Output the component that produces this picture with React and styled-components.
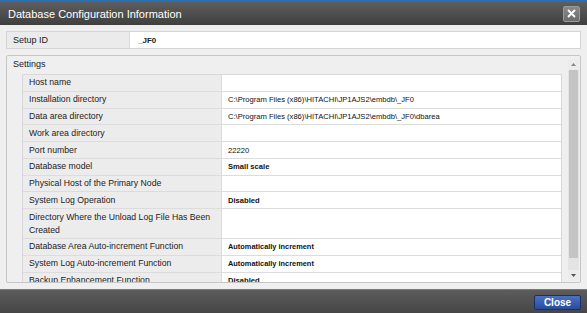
import React from "react";
import styled, { createGlobalStyle } from "styled-components";

const Global = createGlobalStyle`
  html, body { margin: 0; padding: 0; }
  body { font-family: "Liberation Sans", Arial, sans-serif; background: #efefef; }
`;

const Dialog = styled.div`
  width: 587px;
  height: 313px;
  display: flex;
  flex-direction: column;
  background: #efefef;
  overflow: hidden;
`;

const TitleBar = styled.div`
  height: 23px;
  border-top: 2px solid #2b6fb3;
  background: linear-gradient(#5e5e5e, #3f3f3f);
  display: flex;
  align-items: center;
  justify-content: space-between;
  padding: 0 7px 0 8px;
  box-sizing: content-box;
`;

const Title = styled.span`
  color: #ffffff;
  font-size: 11px;
`;

const XButton = styled.div`
  width: 15px;
  height: 14px;
  border: 1px solid #9a9a9a;
  border-radius: 2px;
  background: linear-gradient(#8a8a8a, #6c6c6c);
  display: flex;
  align-items: center;
  justify-content: center;
`;

const Body = styled.div`
  flex: 1;
  display: flex;
  flex-direction: column;
  gap: 6px;
  padding: 6px;
  min-height: 0;
`;

const SetupRow = styled.div`
  height: 16px;
  display: flex;
  border: 1px solid #d4d4d4;
  background: #ffffff;
  font-size: 9px;
  color: #222;
`;

const SetupLabel = styled.div`
  width: 116px;
  padding-left: 6px;
  background: #ebebeb;
  border-right: 1px solid #dadada;
  display: flex;
  align-items: center;
`;

const SetupValue = styled.div`
  padding-left: 8px;
  display: flex;
  align-items: center;
  font-weight: bold;
  font-size: 8px;
`;

const SettingsBox = styled.div`
  flex: 1;
  min-height: 0;
  display: flex;
  border: 1px solid #c6c6c6;
  border-radius: 2px;
  background: #efefef;
  padding: 0 1px 0 0;
`;

const ScrollContent = styled.div`
  flex: 1;
  overflow: hidden;
  padding: 1px 6px 0 6px;
`;

const Legend = styled.div`
  font-size: 9px;
  color: #222;
  height: 17px;
  line-height: 14px;
`;

const Table = styled.div`
  margin-left: 9px;
  border: 1px solid #d8d8d8;
  border-bottom: none;
  background: #ffffff;
`;

const Row = styled.div`
  display: grid;
  grid-template-columns: 199px 1fr;
  border-bottom: 1px solid #dcdcdc;
`;

const Label = styled.div`
  background: #ececec;
  border-right: 1px solid #dcdcdc;
  padding: 1.4px 6px;
  line-height: 13px;
  font-size: 8.7px;
  color: #222;
`;

const Value = styled.div`
  padding: 1.4px 6px;
  line-height: 13px;
  font-size: ${(p) => (p.$small ? "7.4px" : "7.6px")};
  font-weight: ${(p) => (p.$bold ? "bold" : "normal")};
  color: #111;
  white-space: nowrap;
  overflow: hidden;
`;

const Scrollbar = styled.div`
  width: 11px;
  display: flex;
  flex-direction: column;
  background: #e4e4e4;
  margin: 3px 0 1px 0;
`;

const Arrow = styled.div`
  height: 11px;
  display: flex;
  align-items: center;
  justify-content: center;
  background: #ececec;
`;

const Thumb = styled.div`
  flex: 1;
  margin: 0 1px ${(p) => p.$rest}px 1px;
  background: #c4c4c4;
`;

const Footer = styled.div`
  height: 23px;
  border-top: 1px solid #7a7a7a;
  background: linear-gradient(#5c5c5c, #464646);
  display: flex;
  align-items: center;
  justify-content: flex-end;
  padding-right: 6px;
`;

const CloseButton = styled.button`
  width: 47px;
  height: 15px;
  padding: 0;
  border: 1px solid #1a2f66;
  border-radius: 2px;
  background: linear-gradient(#4a72c4, #2a4c9c);
  color: #fff;
  font-family: "Liberation Sans", Arial, sans-serif;
  font-weight: bold;
  font-size: 10px;
  margin-top: 1px;
`;

const rows = [
  ["Host name", ""],
  ["Installation directory", "C:\\Program Files (x86)\\HITACHI\\JP1AJS2\\embdb\\_JF0"],
  ["Data area directory", "C:\\Program Files (x86)\\HITACHI\\JP1AJS2\\embdb\\_JF0\\dbarea"],
  ["Work area directory", ""],
  ["Port number", "22220"],
  ["Database model", "Small scale", true],
  ["Physical Host of the Primary Node", ""],
  ["System Log Operation", "Disabled", true],
  ["Directory Where the Unload Log File Has Been Created", ""],
  ["Database Area Auto-increment Function", "Automatically increment", true, true],
  ["System Log Auto-increment Function", "Automatically increment", true, true],
  ["Backup Enhancement Function", "Disabled", true],
];

export default function App() {
  return (
    <>
      <Global />
      <Dialog>
        <TitleBar>
          <Title>Database Configuration Information</Title>
          <XButton>
            <svg width="9" height="9" viewBox="0 0 9 9">
              <path d="M1 1 L8 8 M8 1 L1 8" stroke="#fff" strokeWidth="1.8" />
            </svg>
          </XButton>
        </TitleBar>
        <Body>
          <SetupRow>
            <SetupLabel>Setup ID</SetupLabel>
            <SetupValue>_JF0</SetupValue>
          </SetupRow>
          <SettingsBox>
            <ScrollContent>
              <Legend>Settings</Legend>
              <Table>
                {rows.map(([l, v, b, s]) => (
                  <Row key={l}>
                    <Label>{l}</Label>
                    <Value $bold={b} $small={s}>{v}</Value>
                  </Row>
                ))}
              </Table>
            </ScrollContent>
            <Scrollbar>
              <Arrow>
                <svg width="5" height="3" viewBox="0 0 5 3"><path d="M0 3 L2.5 0 L5 3 Z" fill="#888" /></svg>
              </Arrow>
              <Thumb $rest={12} />
              <Arrow>
                <svg width="5" height="3" viewBox="0 0 5 3"><path d="M0 0 L2.5 3 L5 0 Z" fill="#555" /></svg>
              </Arrow>
            </Scrollbar>
          </SettingsBox>
        </Body>
        <Footer>
          <CloseButton>Close</CloseButton>
        </Footer>
      </Dialog>
    </>
  );
}
